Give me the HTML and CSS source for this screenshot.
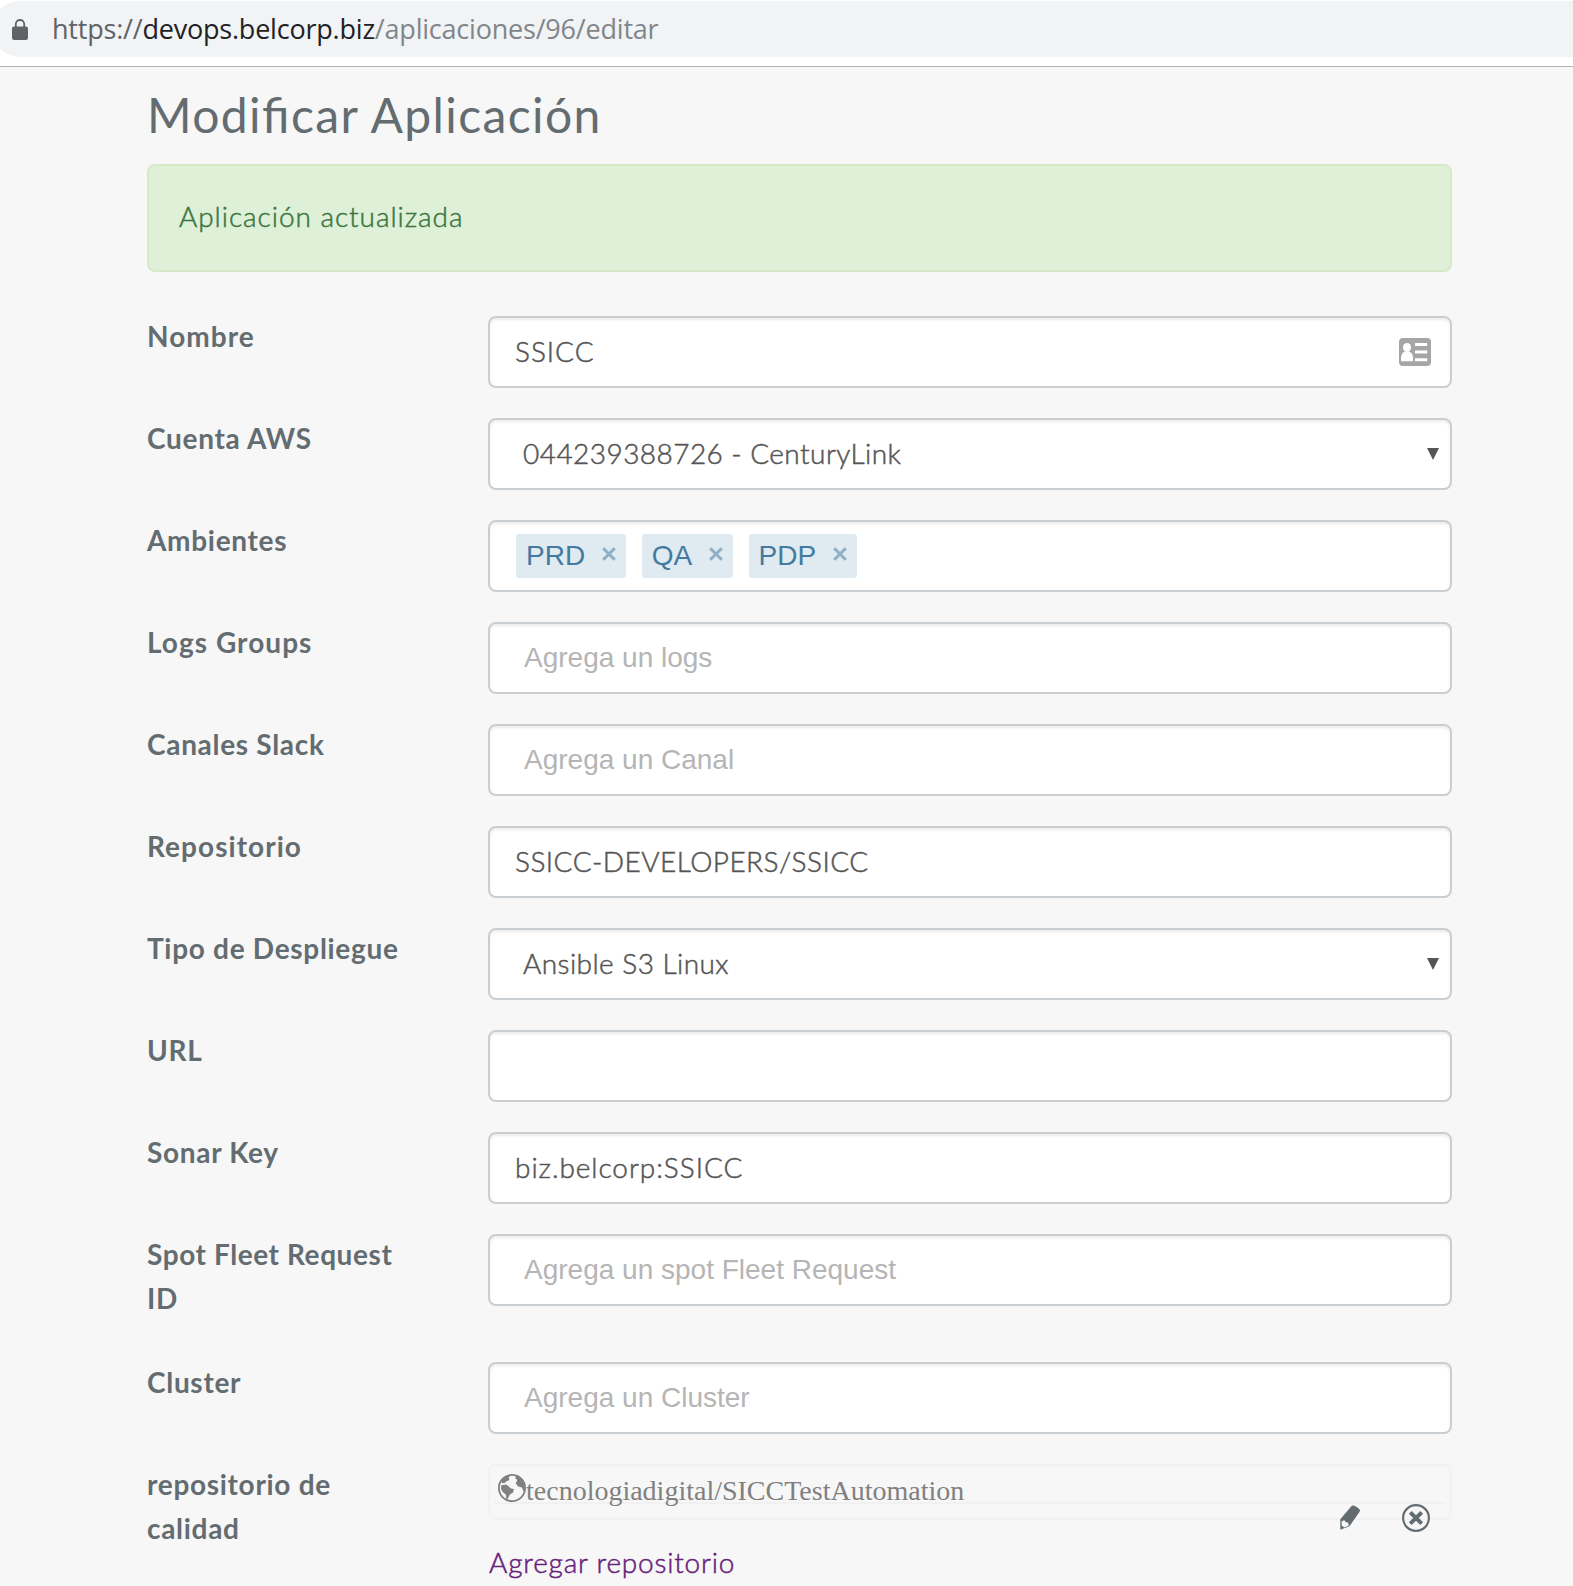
FILE: index.html
```html
<!DOCTYPE html>
<html lang="es">
<head>
<meta charset="utf-8">
<title>Modificar Aplicación</title>
<link rel="stylesheet" href="styles.css">
</head>
<body>
<header class="browser-bar">
  <div class="address">
    <svg class="lock" viewBox="0 0 16 21" width="16" height="21"><path fill="#5f6368" fill-rule="evenodd" d="M2.9 7.5V5.2a5.1 5.1 0 0 1 10.2 0v2.3h.8A2.1 2.1 0 0 1 16 9.600v9.300A2.100 2.100 0 0 1 13.900 21H2.100A2.100 2.100 0 0 1 0 18.900V9.600a2.100 2.100 0 0 1 2.100-2.100zM4.700 7.500h6.600V5.200a3.300 3.300 0 0 0-6.600 0z"/></svg>
    <span class="url"><span class="scheme">https://</span><span class="host">devops.belcorp.biz</span>/aplicaciones/96/editar</span>
  </div>
</header>
<main class="page">
  <h1 class="title">Modificar Aplicación</h1>
  <div class="alert">Aplicación actualizada</div>
  <form class="form">
    <div class="row">
      <label class="label label-wide">Nombre</label>
      <div class="field field-with-icon"><span class="value value-wide">SSICC</span>
        <svg class="card-icon" viewBox="0 0 32 28" width="32" height="28"><rect width="32" height="28" rx="4" fill="#a6a6a6"/><g fill="#fff"><ellipse cx="8" cy="9.500" rx="4" ry="4.500"/><path d="M2 23.200v-2.700q0-5.300 4-7h4q4 1.700 4 7v2.700z"/><path d="M16 5h12.200v3H16zM16 12.500h12.200v3H16zM16 20.200h12.200v3H16z"/></g></svg>
      </div>
    </div>
    <div class="row">
      <label class="label">Cuenta AWS</label>
      <div class="field field-select"><span class="value">044239388726 - CenturyLink</span><svg class="caret" viewBox="0 0 12 12" width="12" height="12"><path fill="#555" d="M0 0h12L6 12z"/></svg></div>
    </div>
    <div class="row">
      <label class="label">Ambientes</label>
      <div class="field field-tags">
        <span class="tag">PRD<svg class="tag-x" viewBox="0 0 14 14" width="14" height="14"><path d="M1.200 1.200l11.600 11.600M12.800 1.200L1.200 12.800"/></svg></span>
        <span class="tag">QA<svg class="tag-x" viewBox="0 0 14 14" width="14" height="14"><path d="M1.200 1.200l11.600 11.600M12.800 1.200L1.200 12.800"/></svg></span>
        <span class="tag">PDP<svg class="tag-x" viewBox="0 0 14 14" width="14" height="14"><path d="M1.200 1.200l11.600 11.600M12.800 1.200L1.200 12.800"/></svg></span>
      </div>
    </div>
    <div class="row">
      <label class="label label-wide">Logs Groups</label>
      <div class="field"><span class="placeholder">Agrega un logs</span></div>
    </div>
    <div class="row">
      <label class="label">Canales Slack</label>
      <div class="field"><span class="placeholder">Agrega un Canal</span></div>
    </div>
    <div class="row">
      <label class="label label-wide">Repositorio</label>
      <div class="field"><span class="value">SSICC-DEVELOPERS/SSICC</span></div>
    </div>
    <div class="row">
      <label class="label">Tipo de Despliegue</label>
      <div class="field field-select"><span class="value">Ansible S3 Linux</span><svg class="caret" viewBox="0 0 12 12" width="12" height="12"><path fill="#555" d="M0 0h12L6 12z"/></svg></div>
    </div>
    <div class="row">
      <label class="label">URL</label>
      <div class="field"></div>
    </div>
    <div class="row">
      <label class="label">Sonar Key</label>
      <div class="field"><span class="value value-wide">biz.belcorp:SSICC</span></div>
    </div>
    <div class="row row-tall">
      <label class="label label-tight">Spot Fleet Request ID</label>
      <div class="field"><span class="placeholder">Agrega un spot Fleet Request</span></div>
    </div>
    <div class="row">
      <label class="label">Cluster</label>
      <div class="field"><span class="placeholder">Agrega un Cluster</span></div>
    </div>
    <div class="row">
      <label class="label">repositorio de calidad</label>
      <div class="repos">
        <div class="repo">
          <div class="repo-line">
            <svg class="globe" viewBox="0 0 28 28" width="28" height="28"><circle cx="14" cy="14" r="13.100" fill="none" stroke="#808080" stroke-width="1.800"/><path fill="#808080" d="M3 7L8 2.300l4.500-1.400-1.800 2.900.8 2.200-2.800 1.300-1.800 1.500-2.400.4zM18 1.300l5 2.700 3.500 5.200.8 5-1.900 3-1.500-3.700-3.600-1-2.600-3 1.600-3.500-2-1.700zM3.200 11.200l4.700-.8 3.100 2 1.300 1.800 3.600.7-.8 3.500-3.200 2-2.100 4-1.500 1.600-.3-5.300-3.300-2.700-1.700-3.300z"/></svg><span class="repo-name">tecnologiadigital/SICCTestAutomation</span>
          </div>
          <div class="actions">
            <svg class="pencil" viewBox="0 0 20 25" width="20" height="25"><path fill="#636c70" fill-rule="evenodd" d="M11.300 1.200Q12.200.1 13.700.5q4 1.300 6 4 .6 1.100-.1 2.200L10.200 20.200 8.800 21.600.3 24.800V14.200zM1.700 16.300v4.300l2.600 2 4.300-1.800-.2-3-2.500-.5-1.600-2z"/></svg>
            <svg viewBox="0 0 28 28" width="28" height="28"><circle cx="14" cy="14" r="12.900" fill="none" stroke="#636c70" stroke-width="2.200"/><path stroke="#636c70" stroke-width="4" d="M8.300 8.300l11.400 11.400M19.700 8.300L8.300 19.700"/></svg>
          </div>
        </div>
        <a class="add-link">Agregar repositorio</a>
      </div>
    </div>
  </form>
</main>
</body>
</html>
```
FILE: styles.css
```css
* { box-sizing: border-box; }
html { overflow: hidden; }
body {
  margin: 0;
  height: 1586px;
  overflow: hidden;
  background: #f7f7f7;
  color: #636c70;
  font-family: Lato, "Open Sans", sans-serif;
  font-size: 28px;
}
svg { display: block; flex: none; }

/* Browser address bar */
.browser-bar {
  height: 67px;
  padding-top: 1px;
  background: #fff;
  border-bottom: 1px solid #b3b3b5;
}
.address {
  display: flex;
  align-items: center;
  gap: 24px;
  height: 56px;
  margin-left: -8px;
  padding-left: 20px;
  border-radius: 28px 0 0 28px;
  background: #f1f3f4;
}
.url {
  font: 27px/56px "Open Sans", sans-serif;
  letter-spacing: -.21px;
  color: #80868b;
  white-space: nowrap;
}
.scheme { color: #5f6368; }
.host { color: #202124; }

/* Page */
.page {
  width: 1305px;
  margin-left: 147px;
  padding-top: 17px;
}
.title {
  margin: 0;
  font-size: 48px;
  font-weight: 400;
  line-height: 62px;
  letter-spacing: 1.4px;
  font-feature-settings: "liga" 1;
}
.alert {
  display: flex;
  align-items: center;
  height: 108px;
  margin-top: 18px;
  padding: 0 30px 4px;
  border: 2px solid #d6e9c6;
  border-radius: 8px;
  background: #dff0d8;
  color: #3c763d;
  font-weight: 300;
  letter-spacing: .95px;
  -webkit-text-stroke: .5px;
}
.form {
  display: flex;
  flex-direction: column;
  gap: 30px;
  margin-top: 44px;
}
.row {
  display: grid;
  grid-template-columns: 275px 964px;
  column-gap: 66px;
  align-items: start;
}
.row-tall { height: 98px; }
.label {
  margin: -2px 0;
  font-weight: 700;
  line-height: 44px;
  letter-spacing: .7px;
}
.label-wide { letter-spacing: 1.05px; }
.label-tight { letter-spacing: .58px; }

/* Fields */
.field {
  display: flex;
  align-items: center;
  height: 72px;
  padding: 0 25px 2px;
  border: 2px solid #c9ced2;
  border-radius: 8px;
  background: #fff;
  box-shadow: inset 0 2px 3px rgba(0, 0, 0, .08);
}
.field-with-icon {
  justify-content: space-between;
  padding-right: 19px;
}
.field-select {
  justify-content: space-between;
  padding: 0 11px 2px 33px;
}
.card-icon, .caret { margin-top: 2px; }
.value {
  color: #555;
  font-weight: 300;
  letter-spacing: .45px;
  -webkit-text-stroke: .5px;
}
.value-wide { letter-spacing: .95px; }
.placeholder {
  padding: 2px 0 0 9px;
  color: #b5b5b5;
  font-family: "Liberation Sans", Arial, sans-serif;
}
.field-tags {
  gap: 16px;
  padding: 0 26px;
}
.tag {
  display: flex;
  align-items: center;
  gap: 16.5px;
  height: 44px;
  padding: 0 10px 1px;
  border-radius: 3px;
  background: #dfeaf1;
  color: #457aa0;
  font-family: "Liberation Sans", Arial, sans-serif;
}
.tag-x {
  margin-bottom: 3px;
  fill: none;
  stroke: #8fafc6;
  stroke-width: 3;
}

/* Repositories */
.repo {
  position: relative;
  height: 56px;
  padding: 6px 4px 0;
  border: 2px solid #f1f1f1;
  border-radius: 8px;
}
.repo-line {
  display: flex;
  height: 32px;
  padding-left: 4px;
  border-bottom: 2px solid #f1f1f1;
}
.globe { margin-top: 2px; }
.repo-name {
  color: #808080;
  font: 28px/38px "Liberation Serif", "Times New Roman", serif;
}
.actions {
  position: absolute;
  top: 38px;
  right: 20px;
  display: flex;
  align-items: center;
  gap: 42px;
}
.pencil { margin-bottom: 2px; }
.add-link {
  display: block;
  margin-top: 20px;
  padding-left: 1px;
  color: #68217a;
  font-weight: 300;
  line-height: 44px;
  letter-spacing: .8px;
  -webkit-text-stroke: .5px;
}
```
